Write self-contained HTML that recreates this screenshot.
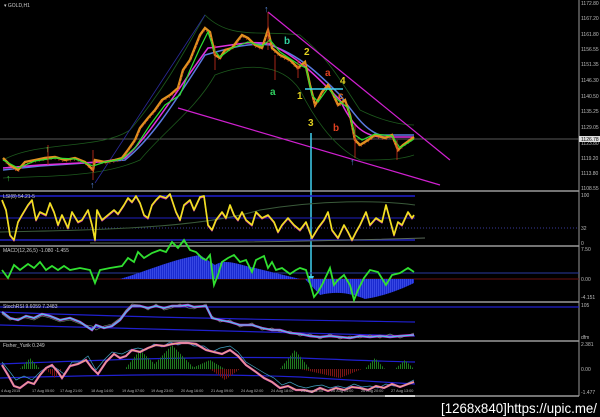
<!DOCTYPE html>
<html><head><meta charset="utf-8"><style>
html,body{margin:0;padding:0;background:#000;width:600px;height:417px;overflow:hidden}
svg{display:block}
text{font-family:"Liberation Sans",sans-serif}
</style></head><body>
<svg width="600" height="417" viewBox="0 0 600 417" xmlns="http://www.w3.org/2000/svg">
<defs>
<pattern id="pg" width="2" height="4" patternUnits="userSpaceOnUse"><rect width="1" height="4" fill="#1f7a1f"/></pattern>
<pattern id="pr" width="2" height="4" patternUnits="userSpaceOnUse"><rect width="1" height="4" fill="#7a1515"/></pattern>
<pattern id="pb" width="2" height="4" patternUnits="userSpaceOnUse"><rect width="2" height="4" fill="#1a2ad0"/><rect width="0.6" height="4" fill="#4a5af0"/></pattern>
</defs>
<rect width="600" height="417" fill="#000"/>
<g stroke="#9a9a9a" stroke-width="1.5">
<line x1="0" y1="191" x2="579" y2="191"/>
<line x1="0" y1="246" x2="579" y2="246"/>
<line x1="0" y1="302" x2="579" y2="302"/>
<line x1="0" y1="341" x2="579" y2="341"/>
<line x1="0" y1="396" x2="579" y2="396"/>
</g>
<line x1="579" y1="0" x2="579" y2="396" stroke="#9a9a9a"/>
<line x1="0" y1="139" x2="579" y2="139" stroke="#777" stroke-width="0.8"/>
<line x1="385" y1="396" x2="415" y2="396" stroke="#fff" stroke-width="1.5"/>

<g fill="none">
<path d="M3,160 C40,140 100,150 130,130 C160,95 180,60 205,15 C230,40 260,30 300,35 C330,60 340,80 360,110 C380,120 400,125 414,125" stroke="#1d5a1d" stroke-width="0.8"/>
<path d="M3,178 C40,176 100,178 140,160 C165,130 195,110 215,75 C240,65 280,60 300,90 C320,130 340,150 360,160 C380,160 400,160 414,155" stroke="#1d5a1d" stroke-width="0.8"/>
<line x1="95" y1="183" x2="205" y2="15" stroke="#2a2a9a" stroke-width="0.8"/>
<line x1="268" y1="12" x2="450" y2="160" stroke="#d020d0" stroke-width="1.2"/>
<line x1="178" y1="108" x2="440" y2="185" stroke="#d020d0" stroke-width="1.2"/>
<path d="M3,170 L40,166 L100,162 L125,160 C150,140 170,110 205,55 C230,48 250,42 270,45 C300,55 320,75 340,95 C355,115 365,130 380,135 L414,135" stroke="#5a7ae0" stroke-width="1.5"/>
<path d="M3,168 L40,165 L100,162 L125,158 C150,135 170,100 208,48 C230,46 250,40 270,44 C300,58 320,80 340,100 C352,125 362,135 380,137 L414,137" stroke="#e030e0" stroke-width="1.5"/>
<polyline points="3,158 10,165 18,170 25,162 35,160 45,158 55,157 65,160 75,158 85,162 93,170 95,160 105,162 115,160 122,158 128,150 135,140 140,128 148,118 155,110 162,100 170,95 178,88 183,70 190,60 196,45 200,35 205,28 210,32 215,55 220,58 225,50 232,48 238,40 242,35 248,38 255,45 262,48 268,30 272,48 280,55 290,60 298,68 305,62 310,85 315,105 318,100 322,92 328,85 332,92 338,105 345,100 350,115 355,140 360,145 368,140 375,135 385,138 392,135 398,150 403,145 410,140 414,137" stroke="#e09020" stroke-width="2.4"/>
<polyline points="3,160 10,167 18,172 25,164 35,162 45,160 55,159 65,162 75,160 85,164 93,172 95,162 105,164 115,162 122,160 128,152 135,142 140,130 148,120 155,112 162,102 170,97 178,90 183,72 190,62 196,47 200,37 205,30 210,34 215,57 220,60 225,52 232,50 238,42 242,37 248,40 255,47 262,50 268,32 272,50 280,57 290,62 298,70 305,64 310,87 315,107 318,102 322,94 328,87 332,94 338,107 345,102 350,117 355,142 360,147 368,142 375,137 385,140 392,137 398,152 403,147 410,142 414,139" stroke="#c03020" stroke-width="1" stroke-dasharray="1,3"/>
<polyline points="3,160 18,168 35,161 55,158 75,159 93,166 105,162 122,159 135,148 150,125 165,105 180,95 190,70 200,48 208,32 214,50 220,57 232,48 248,42 262,46 270,40 280,52 298,64 306,68 312,95 318,102 328,88 338,100 348,108 355,135 362,140 375,134 392,136 400,148 414,139" stroke="#30e030" stroke-width="1.2"/>
<g stroke="#d03020" stroke-width="0.8">
<line x1="93" y1="150" x2="93" y2="180"/><line x1="275" y1="55" x2="275" y2="80"/><line x1="298" y1="60" x2="298" y2="78"/>
<line x1="355" y1="125" x2="355" y2="158"/><line x1="397" y1="140" x2="397" y2="160"/><line x1="215" y1="45" x2="215" y2="70"/>
<line x1="268" y1="12" x2="268" y2="50"/><line x1="48" y1="145" x2="48" y2="165"/>
</g>
<line x1="311" y1="133" x2="311" y2="280" stroke="#40d0f0" stroke-width="1.5"/>
<polygon points="308,276 314,276 311,284" fill="#40d0f0"/>
<line x1="305" y1="89" x2="343" y2="89" stroke="#40d0f0" stroke-width="1.5"/>
</g>
<g font-family="Liberation Serif,serif" font-size="10" font-weight="bold">
<text x="284" y="44" fill="#30d0a0">b</text><text x="304" y="55" fill="#e0d020">2</text>
<text x="270" y="95" fill="#30d060">a</text><text x="297" y="99" fill="#e0d020">1</text>
<text x="325" y="76" fill="#e04020">a</text><text x="340" y="84" fill="#e0d020">4</text>
<text x="338" y="99" fill="#e07020">c</text><text x="308" y="126" fill="#e0d020">3</text>
<text x="333" y="131" fill="#e04020">b</text>
</g>
<g fill="#5a8ae0" font-size="9"><text x="90" y="188">↑</text><text x="264" y="12">↑</text><text x="350" y="165">↑</text></g>
<g fill="#40c040" font-size="9"><text x="45" y="152">↑</text><text x="6" y="181">↑</text></g>
<text x="4" y="7" fill="#ccc" font-size="5">▾ GOLD,H1</text>

<g fill="#bbb" font-size="5" font-family="Liberation Serif,serif">
<text x="581" y="5">1172.80</text><text x="581" y="20">1167.20</text><text x="581" y="36">1161.80</text>
<text x="581" y="51">1156.55</text><text x="581" y="66">1151.35</text><text x="581" y="82">1146.30</text>
<text x="581" y="98">1140.50</text><text x="581" y="113">1135.25</text><text x="581" y="129">1129.05</text>
<text x="581" y="145">1123.80</text><text x="581" y="160">1119.20</text><text x="581" y="175">1113.80</text>
<text x="581" y="190">1108.55</text>
<text x="581" y="197">100</text><text x="581" y="230">32</text><text x="581" y="245">0</text>
<text x="581" y="251">7.50</text><text x="581" y="281">0.00</text><text x="581" y="299">-4.151</text>
<text x="581" y="307">105</text><text x="581" y="339">dfm</text>
<text x="581" y="346">2.381</text><text x="581" y="371">0.00</text><text x="581" y="394">-1.477</text>
</g>
<rect x="579" y="136" width="21" height="6" fill="#ddd"/>
<text x="581" y="141" fill="#000" font-size="5">1126.78</text>

<!-- RSI -->
<g fill="none">
<line x1="0" y1="196" x2="415" y2="196" stroke="#2020d0" stroke-width="1.5"/>
<line x1="0" y1="218" x2="415" y2="218" stroke="#2020c0" stroke-width="1"/>
<line x1="0" y1="240" x2="415" y2="240" stroke="#2020c0" stroke-width="1.5"/>
<line x1="0" y1="228" x2="579" y2="228" stroke="#3a3a9a" stroke-dasharray="1,2"/>
<path d="M0,232 C100,230 200,228 260,210 C320,200 380,200 415,205" stroke="#3a5a3a"/>
<path d="M90,243 C200,243 300,242 425,238" stroke="#5a6a5a"/>
<g stroke-linejoin="round">
<polyline points="2,201 6,211 10,236 14,241 18,223 22,216 28,206 32,201 36,221 40,213 46,216 50,204 54,213 58,226 62,216 68,229 72,213 78,223 82,221 88,211 92,226 95,241 97,211 102,221 108,216 114,211 118,215 124,206 128,199 132,203 136,197 140,204 144,216 148,219 152,206 156,201 160,197 166,199 170,195 176,213 180,221 184,206 190,201 194,211 200,198 204,197 208,226 212,231 216,221 222,213 226,219 230,206 234,216 238,221 242,213 246,221 252,226 256,213 262,219 268,216 274,223 278,233 282,226 288,219 294,226 300,231 306,223 312,239 318,229 324,221 328,213 332,231 338,239 344,226 348,233 352,241 356,233 360,226 366,213 370,226 376,219 382,223 386,206 390,221 394,236 398,223 402,226 408,213 412,219 414,216" stroke="#c020c0" stroke-width="1.2"/>
<polyline points="2,200 6,210 10,235 14,240 18,222 22,215 28,205 32,200 36,220 40,212 46,215 50,203 54,212 58,225 62,215 68,228 72,212 78,222 82,220 88,210 92,225 95,240 97,210 102,220 108,215 114,210 118,214 124,205 128,198 132,202 136,196 140,203 144,215 148,218 152,205 156,200 160,196 166,198 170,194 176,212 180,220 184,205 190,200 194,210 200,197 204,196 208,225 212,230 216,220 222,212 226,218 230,205 234,215 238,220 242,212 246,220 252,225 256,212 262,218 268,215 274,222 278,232 282,225 288,218 294,225 300,230 306,222 312,238 318,228 324,220 328,212 332,230 338,238 344,225 348,232 352,240 356,232 360,225 366,212 370,225 376,218 382,222 386,205 390,220 394,235 398,222 402,225 408,212 412,218 414,215" stroke="#f0e020" stroke-width="1.7"/>
</g>
</g>
<text x="3" y="198" fill="#ccc" font-size="5">LSI(8) 54.21-5</text>

<!-- MACD -->
<line x1="0" y1="273" x2="579" y2="273" stroke="#2a3aa0"/>
<line x1="0" y1="279" x2="579" y2="279" stroke="#6a1010"/>
<path d="M120,279 C150,270 170,260 200,255 L215,265 C225,258 240,265 255,268 L300,279 Z" fill="url(#pb)"/>
<path d="M305,279 L320,295 C340,290 355,295 365,299 C380,297 400,290 414,283 L414,279 Z" fill="url(#pb)"/>
<polyline points="2,270 8,278 14,265 20,270 28,264 34,268 40,262 46,270 52,266 58,270 64,266 70,270 80,268 90,270 95,283 100,270 110,268 122,266 128,258 134,262 138,252 144,258 152,253 160,250 166,252 172,242 178,248 184,240 190,250 196,252 202,258 206,260 210,255 214,285 218,275 222,262 228,258 234,255 240,262 246,260 252,272 256,260 264,256 268,268 272,262 276,270 282,268 290,274 296,270 300,268 306,270 310,283 314,297 318,292 322,285 330,268 334,285 338,280 344,275 350,285 354,300 358,290 364,278 370,270 378,272 386,285 392,275 400,273 408,268 414,272" fill="none" stroke="#30e030" stroke-width="1.8"/>
<text x="3" y="252" fill="#ccc" font-size="5">MACD(12,26,5) -1.080 -1.455</text>

<!-- StochRSI -->
<g fill="none">
<line x1="0" y1="307" x2="579" y2="307" stroke="#2020d0" stroke-width="1.2"/>
<path d="M0,312 C150,318 300,320 415,322" stroke="#2020d0" stroke-width="1.2"/>
<path d="M0,325 C150,330 300,333 415,336" stroke="#2020d0" stroke-width="1.2"/>
<polyline points="2,314 10,320 18,318 26,318 34,320 42,316 50,318 60,322 70,320 80,324 92,326 96,330 104,326 112,324 120,318 126,310 132,304 140,305 148,310 156,304 164,310 172,308 180,304 188,308 194,309 206,304 212,316 220,322 230,320 240,327 252,323 262,330 272,328 280,332 290,331 300,336 310,334 320,339 330,334 340,339 350,336 360,338 370,335 380,338 390,334 400,338 414,333" stroke="#7a9a7a" stroke-width="0.6"/>
<polyline points="2,312 10,318 18,320 26,316 34,318 42,314 50,316 60,320 70,318 80,322 92,330 96,325 104,328 112,326 120,320 126,312 132,306 140,306 148,308 156,306 164,308 172,306 180,306 188,305 194,307 206,306 212,318 220,320 230,322 240,325 252,325 262,328 272,330 280,330 290,333 300,334 310,336 320,337 330,336 340,337 350,338 360,336 370,337 380,336 390,337 400,336 414,335" stroke="#c040d0" stroke-width="2.4"/>
<polyline points="2,312 10,318 18,320 26,316 34,318 42,314 50,316 60,320 70,318 80,322 92,330 96,325 104,328 112,326 120,320 126,312 132,306 140,306 148,308 156,306 164,308 172,306 180,306 188,305 194,307 206,306 212,318 220,320 230,322 240,325 252,325 262,328 272,330 280,330 290,333 300,334 310,336 320,337 330,336 340,337 350,338 360,336 370,337 380,336 390,337 400,336 414,335" stroke="#40d0f0" stroke-width="1.1"/>
</g>
<text x="3" y="308" fill="#ccc" font-size="5">StochRSI 9.6059 7.2483</text>

<!-- Fisher -->
<g fill="none">
<path d="M0,364 C100,360 200,356 300,358 C350,360 400,362 415,362" stroke="#2020d0" stroke-width="1.2"/>
<path d="M0,378 C100,375 200,373 300,377 L415,384" stroke="#2020d0" stroke-width="1.2"/>
</g>
<path d="M20,369 L30,358 L40,369 Z M125,369 L140,350 L160,369 Z M150,369 L172,345 L195,369 Z M190,369 L210,360 L225,369 Z M280,369 L295,350 L310,369 Z M365,369 L375,358 L385,369 Z M395,369 L405,360 L414,369 Z" fill="url(#pg)"/>
<path d="M45,369 L55,378 L62,369 Z M210,369 L225,380 L240,369 Z M300,369 L340,378 L362,369 Z" fill="url(#pr)"/>
<polyline points="2,362 10,372 16,380 24,376 32,380 40,372 48,366 56,368 64,374 72,362 80,362 88,356 96,370 104,360 112,352 122,354 130,350 138,348 146,350 154,344 162,347 170,342 178,345 186,342 194,346 204,346 212,352 220,348 230,346 238,352 246,362 256,368 266,374 274,378 282,385 290,382 298,386 306,388 314,386 322,385 330,388 338,386 346,388 354,384 362,387 370,386 378,388 386,384 394,386 402,386 410,382 414,380" fill="none" stroke="#40a0c0" stroke-width="0.7"/>
<polyline points="2,365 8,375 14,386 20,388 28,382 34,384 40,375 46,368 52,365 58,372 62,378 70,366 78,364 86,360 92,368 98,374 106,362 114,354 120,358 126,356 132,350 140,352 148,348 156,345 164,346 172,344 180,343 188,343 196,344 206,350 214,352 222,354 230,350 238,356 246,365 256,372 264,378 272,382 280,388 288,386 296,390 304,390 312,392 320,388 328,391 336,388 344,390 352,387 360,388 368,390 376,386 384,388 392,384 400,387 408,384 414,382" fill="none" stroke="#e060c0" stroke-width="2.2"/>
<polyline points="2,365 8,375 14,386 20,388 28,382 34,384 40,375 46,368 52,365 58,372 62,378 70,366 78,364 86,360 92,368 98,374 106,362 114,354 120,358 126,356 132,350 140,352 148,348 156,345 164,346 172,344 180,343 188,343 196,344 206,350 214,352 222,354 230,350 238,356 246,365 256,372 264,378 272,382 280,388 288,386 296,390 304,390 312,392 320,388 328,391 336,388 344,390 352,387 360,388 368,390 376,386 384,388 392,384 400,387 408,384 414,382" fill="none" stroke="#f0c070" stroke-width="0.7"/>
<text x="3" y="347" fill="#ccc" font-size="5">Fisher_Yurik 0.249</text>

<g fill="#bbb" font-size="3.8">
<text x="1" y="392">4 Aug 2015</text><text x="32" y="392">17 Aug 05:00</text><text x="60" y="392">17 Aug 21:00</text>
<text x="91" y="392">18 Aug 14:00</text><text x="122" y="392">19 Aug 07:00</text><text x="151" y="392">19 Aug 23:00</text>
<text x="181" y="392">20 Aug 16:00</text><text x="211" y="392">21 Aug 09:00</text><text x="241" y="392">24 Aug 02:00</text>
<text x="271" y="392">24 Aug 18:00</text><text x="301" y="392">25 Aug 11:00</text><text x="331" y="392">26 Aug 04:00</text>
<text x="361" y="392">26 Aug 20:00</text><text x="391" y="392">27 Aug 13:00</text>
</g>
<text x="441" y="413" fill="#fff" font-size="14" font-family="DejaVu Sans Mono,monospace" textLength="156" lengthAdjust="spacingAndGlyphs">[1268x840]https://upic.me/</text>
</svg>
</body></html>
